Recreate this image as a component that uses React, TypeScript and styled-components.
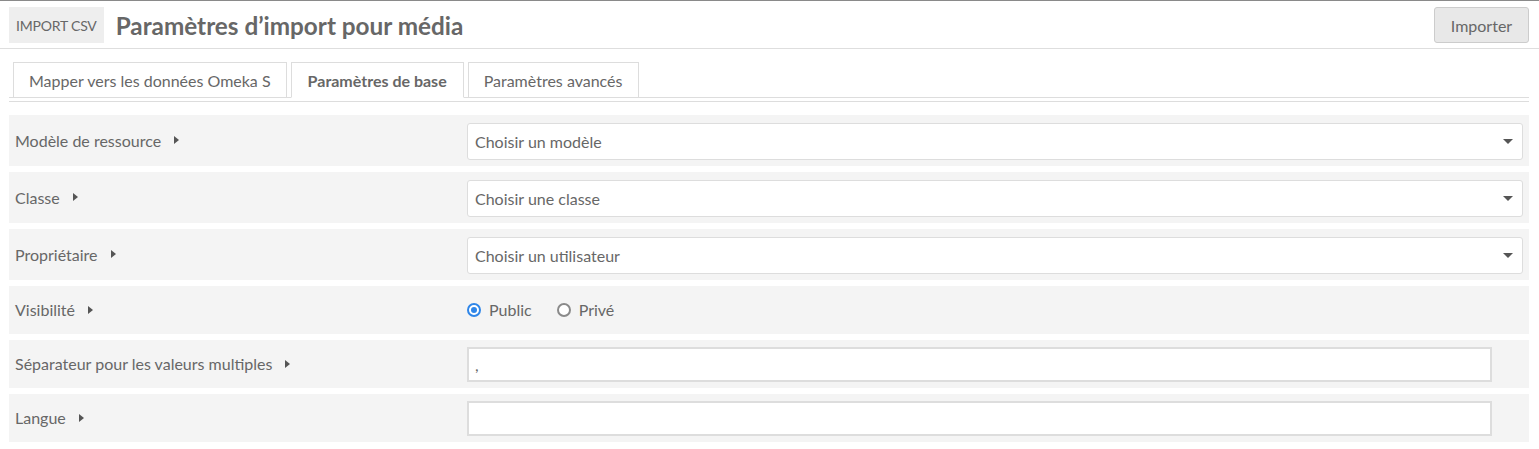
import React from "react";
import styled, { createGlobalStyle } from "styled-components";

const GlobalStyle = createGlobalStyle`
  html, body {
    margin: 0;
    padding: 0;
    background: #fff;
  }
  body {
    font-family: Lato, "Open Sans", "Liberation Sans", sans-serif;
    color: #676767;
    font-size: 16px;
  }
`;

const Page = styled.div`
  border-top: 1px solid #8a8a8a;
`;

const Header = styled.header`
  display: flex;
  align-items: center;
  gap: 12px;
  padding: 6px 10px 5px 9px;
  border-bottom: 1px solid #dedede;
`;

const Badge = styled.span`
  display: flex;
  align-items: center;
  height: 36px;
  padding: 0 7px;
  background: #eeeeee;
  font-size: 14px;
  letter-spacing: -0.2px;
  color: #676767;
`;

const Title = styled.h1`
  margin: 0;
  flex: 1;
  font-size: 24.3px;
  font-weight: 700;
  color: #676767;
`;

const ImportButton = styled.button`
  height: 36px;
  width: 95px;
  font-family: inherit;
  font-size: 16px;
  color: #676767;
  background: #e8e8e8;
  border: 1px solid #cccccc;
  border-radius: 3px;
`;

const Body = styled.div`
  padding: 0 10px 0 9px;
`;

const Tabs = styled.ul`
  display: flex;
  gap: 4px;
  list-style: none;
  margin: 13px 0 0;
  padding: 0 0 0 4px;
  border-bottom: 1px solid #dddddd;
`;

const Tab = styled.li<{ $active?: boolean }>`
  display: flex;
  align-items: center;
  height: 34px;
  padding: 0 ${(p) => (p.$active ? 16 : 15)}px;
  margin-bottom: -1px;
  border: 1px solid #dddddd;
  border-bottom-color: ${(p) => (p.$active ? "#fff" : "#dddddd")};
  background: #fff;
  font-size: 16px;
  font-weight: ${(p) => (p.$active ? 700 : 400)};
  color: #676767;
`;

const Fieldset = styled.div`
  margin-top: 3px;
  border-top: 1px solid #dddddd;
  padding-top: 13px;
  display: flex;
  flex-direction: column;
  gap: 6px;
`;

const Row = styled.div<{ $tall?: boolean }>`
  display: grid;
  grid-template-columns: 452px 1fr;
  align-items: center;
  min-height: ${(p) => (p.$tall ? 51 : 48)}px;
  box-sizing: border-box;
  padding: 7px 6px 6px;
  background: #f4f4f4;
`;

const Label = styled.span`
  display: flex;
  align-items: center;
  gap: 13px;
  margin-top: -2px;
  font-size: 16px;
  color: #676767;
`;

const Arrow = styled.span`
  width: 0;
  height: 0;
  border-top: 4.5px solid transparent;
  border-bottom: 4.5px solid transparent;
  border-left: 5px solid #555;
`;

const Select = styled.div`
  display: flex;
  align-items: center;
  justify-content: space-between;
  height: 37px;
  box-sizing: border-box;
  padding: 0 9px 0 7px;
  background: #fff;
  border: 1px solid #dddddd;
  border-radius: 3px;
  font-size: 16px;
  color: #676767;
`;

const Caret = styled.span`
  width: 0;
  height: 0;
  border-left: 5px solid transparent;
  border-right: 5px solid transparent;
  border-top: 5px solid #555;
`;

const TextInput = styled.input`
  width: 1025px;
  height: 35px;
  box-sizing: border-box;
  padding: 0 6px;
  border: 2px solid #dddddd;
  border-radius: 0;
  background: #fff;
  font-family: inherit;
  font-size: 16px;
  color: #676767;
  outline: none;
`;

const Radios = styled.div`
  display: flex;
  align-items: center;
  gap: 25px;
  margin-top: -2px;
`;

const RadioLabel = styled.label`
  display: flex;
  align-items: center;
  gap: 8px;
  font-size: 16px;
  color: #676767;
`;

const RadioDot = styled.span<{ $checked?: boolean }>`
  width: 14px;
  height: 14px;
  box-sizing: border-box;
  border-radius: 50%;
  border: 2px solid ${(p) => (p.$checked ? "#2f86e8" : "#8a8a8a")};
  background: #fff;
  display: flex;
  align-items: center;
  justify-content: center;
  &::after {
    content: "";
    width: 6px;
    height: 6px;
    border-radius: 50%;
    background: ${(p) => (p.$checked ? "#2f86e8" : "transparent")};
  }
`;

const selects = [
  { label: "Modèle de ressource", placeholder: "Choisir un modèle" },
  { label: "Classe", placeholder: "Choisir une classe" },
  { label: "Propriétaire", placeholder: "Choisir un utilisateur" },
];

export default function App() {
  return (
    <Page>
      <GlobalStyle />
      <Header>
        <Badge>IMPORT CSV</Badge>
        <Title>Paramètres d’import pour média</Title>
        <ImportButton>Importer</ImportButton>
      </Header>
      <Body>
        <Tabs>
          <Tab>Mapper vers les données Omeka S</Tab>
          <Tab $active>Paramètres de base</Tab>
          <Tab>Paramètres avancés</Tab>
        </Tabs>
        <Fieldset>
          {selects.map((s) => (
            <Row $tall key={s.label}>
              <Label>
                {s.label}
                <Arrow />
              </Label>
              <Select>
                {s.placeholder}
                <Caret />
              </Select>
            </Row>
          ))}
          <Row>
            <Label>
              Visibilité
              <Arrow />
            </Label>
            <Radios>
              <RadioLabel>
                <RadioDot $checked />
                Public
              </RadioLabel>
              <RadioLabel>
                <RadioDot />
                Privé
              </RadioLabel>
            </Radios>
          </Row>
          <Row>
            <Label>
              Séparateur pour les valeurs multiples
              <Arrow />
            </Label>
            <TextInput defaultValue="," />
          </Row>
          <Row>
            <Label>
              Langue
              <Arrow />
            </Label>
            <TextInput defaultValue="" />
          </Row>
        </Fieldset>
      </Body>
    </Page>
  );
}
